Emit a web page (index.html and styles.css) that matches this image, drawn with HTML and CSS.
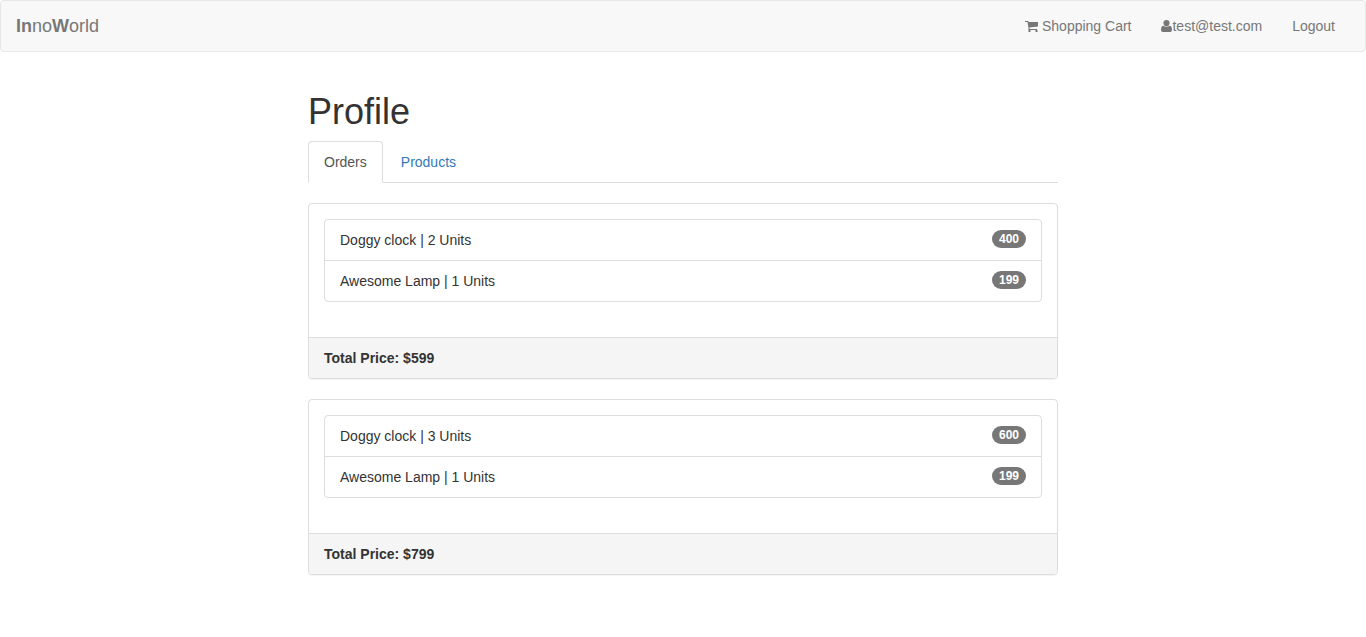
FILE: index.html
```html
<!DOCTYPE html>
<html lang="en">
<head>
<meta charset="utf-8">
<meta name="viewport" content="width=device-width, initial-scale=1">
<title>InnoWorld</title>
<link rel="stylesheet" href="styles.css">
</head>
<body>
<nav class="navbar">
  <a class="brand" href="#"><b>In</b>no<b>W</b>orld</a>
  <ul class="nav-links">
    <li><a href="#"><svg class="icon icon-cart" viewBox="0 0 13 14" aria-hidden="true"><path d="M0 2H3.500V3H13V7.500L4.500 8.500V10H12V11H12.500V13H10.500V11H5.500V13H3.500V9L2.500 3H0z"/></svg> Shopping Cart</a></li>
    <li><a href="#"><svg class="icon icon-user" viewBox="0 0 11 14" aria-hidden="true"><path d="M5.500 1a3.100 3.100 0 0 1 0 6.200a3.100 3.100 0 0 1 0-6.200zM2.500 6.700Q5.500 8.800 8.500 6.700Q11 6.900 11 10.800Q11 13 9.200 13H1.800Q0 13 0 10.800Q0 6.900 2.500 6.700z"/></svg>test@test.com</a></li>
    <li><a href="#">Logout</a></li>
  </ul>
</nav>
<main class="container">
  <h1 class="title">Profile</h1>
  <ul class="tabs">
    <li><a class="tab tab-active" href="#" aria-current="page">Orders</a></li>
    <li><a class="tab" href="#">Products</a></li>
  </ul>
  <section class="panel">
    <div class="panel-body">
      <ul class="list">
        <li class="list-item">Doggy clock | 2 Units<span class="badge">400</span></li>
        <li class="list-item">Awesome Lamp | 1 Units<span class="badge">199</span></li>
      </ul>
    </div>
    <div class="panel-footer"><strong>Total Price: $599</strong></div>
  </section>
  <section class="panel">
    <div class="panel-body">
      <ul class="list">
        <li class="list-item">Doggy clock | 3 Units<span class="badge">600</span></li>
        <li class="list-item">Awesome Lamp | 1 Units<span class="badge">199</span></li>
      </ul>
    </div>
    <div class="panel-footer"><strong>Total Price: $799</strong></div>
  </section>
</main>
</body>
</html>
```
FILE: styles.css
```css
* { box-sizing: border-box; }

body {
  margin: 0;
  background: #fff;
  color: #333;
  font-family: "Liberation Sans", Arial, sans-serif;
  font-size: 14px;
  line-height: 20px;
}

a { text-decoration: none; }

ul { margin: 0; padding: 0; list-style: none; }

.navbar {
  display: flex;
  justify-content: space-between;
  padding: 0 15px;
  border: 1px solid #e7e7e7;
  border-radius: 4px;
  background: #f8f8f8;
}

.brand {
  padding: 15px 0;
  color: #777;
  font-size: 18px;
}

.nav-links { display: flex; }

.nav-links a {
  display: block;
  padding: 15px;
  color: #777;
}

.icon {
  height: 14px;
  fill: currentColor;
  vertical-align: -2px;
}

.icon-cart { width: 13px; }
.icon-user { width: 11px; }

.container {
  max-width: 780px;
  margin: 0 auto;
  padding: 40px 15px 0;
}

.title {
  margin: 0 0 10px;
  font-size: 36px;
  font-weight: 500;
  line-height: 39px;
}

.tabs {
  display: flex;
  gap: 2px;
  margin-bottom: 20px;
  border-bottom: 1px solid #ddd;
}

.tab {
  display: block;
  margin-bottom: -1px;
  padding: 10px 15px;
  border: 1px solid transparent;
  border-radius: 4px 4px 0 0;
  color: #337ab7;
}

.tab-active {
  border-color: #ddd #ddd #fff;
  background: #fff;
  color: #555;
}

.panel {
  margin-bottom: 20px;
  border: 1px solid #ddd;
  border-radius: 4px;
  box-shadow: 0 1px 1px rgba(0, 0, 0, 0.05);
}

.panel-body { padding: 15px 15px 35px; }

.list {
  border: 1px solid #ddd;
  border-radius: 4px;
}

.list-item {
  display: flex;
  justify-content: space-between;
  align-items: flex-start;
  padding: 10px 15px;
}

.list-item + .list-item { border-top: 1px solid #ddd; }

.badge {
  min-width: 10px;
  padding: 3px 7px;
  border-radius: 10px;
  background: #777;
  color: #fff;
  font-size: 12px;
  font-weight: bold;
  line-height: 12px;
}

.panel-footer {
  padding: 10px 15px;
  border-top: 1px solid #ddd;
  border-radius: 0 0 3px 3px;
  background: #f5f5f5;
}
```
